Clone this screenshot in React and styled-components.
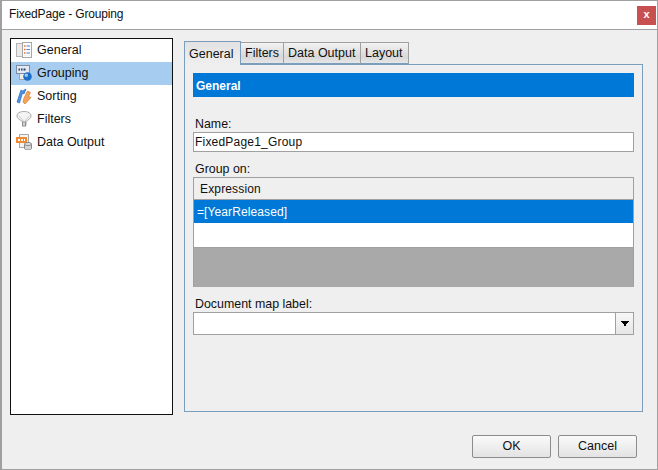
import styled, { createGlobalStyle } from "styled-components";

const Global = createGlobalStyle`
  html, body { margin: 0; padding: 0; background: #efefef; }
  body { font-family: "Liberation Sans", Arial, sans-serif; font-size: 12px; color: #111; }
`;

function GeneralIcon() {
  return (
    <svg width="16" height="16" viewBox="0 0 16 16">
      <rect x="0.5" y="1.5" width="7" height="13" fill="#e9e9e9" stroke="#b5b5b5" />
      <rect x="6.5" y="0.5" width="9" height="15" fill="#fbfbfb" stroke="#a8a8a8" />
      <path d="M8 4h1.500M8 7.500h1.500M8 11h1.500" stroke="#e8772e" strokeWidth="1.4" />
      <path d="M10.500 4h3.500M10.500 7.500h3.500M10.500 11h3.500" stroke="#4a86cc" strokeWidth="1.200" />
    </svg>
  );
}

function GroupingIcon() {
  return (
    <svg width="16" height="16" viewBox="0 0 16 16">
      <rect x="3.500" y="6.500" width="7" height="8" fill="#eeeeee" stroke="#a5a5a5" />
      <rect x="0.500" y="0.500" width="13" height="8" fill="#e3eaf4" stroke="#7f8da0" />
      <path d="M2.500 4.500h1.500M5 4.500h1.500M7.500 4.500h2" stroke="#2b3f63" strokeWidth="2" />
      <circle cx="11.500" cy="11.500" r="4.300" fill="#1b6fc8" />
      <circle cx="10.300" cy="10.300" r="1.700" fill="#9acbf4" />
    </svg>
  );
}

function SortingIcon() {
  return (
    <svg width="16" height="16" viewBox="0 0 16 16">
      <path d="M1 14L5 2l1.500 1L10 1 8 6 6.500 5 3.500 15z" fill="#4c93e6" stroke="#2a68bd" strokeWidth="0.700" />
      <path d="M8 10l3.500-7 3 1.500-2 4 2.500 1-6 6.500-2-2z" fill="#f3a45c" stroke="#e07a2a" strokeWidth="0.700" />
    </svg>
  );
}

function FiltersIcon() {
  return (
    <svg width="16" height="16" viewBox="0 0 16 16">
      <path d="M1 5c0-3 3-4.500 7-4.500s7 1.500 7 4.500c0 2.500-3 4-5 5.500v4H6.500v-4C4 9 1 7.500 1 5z" fill="#f4f4f4" stroke="#a8a8a8" />
      <path d="M3 5l4.500 5M13 5L9 10" stroke="#c9c9c9" fill="none" />
      <rect x="6.500" y="11" width="3" height="4" fill="#d5d5d5" stroke="#8f8f8f" />
    </svg>
  );
}

function DataOutputIcon() {
  return (
    <svg width="16" height="16" viewBox="0 0 16 16">
      <rect x="3.500" y="0.500" width="9" height="13" fill="#f3f3f3" stroke="#a8a8a8" />
      <rect x="0" y="3" width="11" height="6" fill="#ee8a32" />
      <path d="M2 6h7" stroke="#fff" strokeWidth="2" strokeDasharray="2 1" />
      <path d="M8.500 10v4.500c0 .8 1.500 1.500 3.500 1.500s3.500-.7 3.500-1.500V10" fill="#d5d5d5" stroke="#888" />
      <ellipse cx="12" cy="10" rx="3.500" ry="1.500" fill="#e3e3e3" stroke="#888" />
    </svg>
  );
}

const navItems = [
  { label: "General", Icon: GeneralIcon },
  { label: "Grouping", Icon: GroupingIcon, selected: true },
  { label: "Sorting", Icon: SortingIcon },
  { label: "Filters", Icon: FiltersIcon },
  { label: "Data Output", Icon: DataOutputIcon },
];

const tabs = [
  { label: "General", width: 57 },
  { label: "Filters", width: 43 },
  { label: "Data Output", width: 77 },
  { label: "Layout", width: 48 },
];

function App() {
  return (
    <>
      <Global />
      <Window>
        <TitleBar>
          <Title>FixedPage - Grouping</Title>
          <CloseButton>x</CloseButton>
        </TitleBar>
        <Body>
          <Main>
            <NavList>
              {navItems.map(({ label, Icon, selected }) => (
                <NavItem key={label} $selected={selected}>
                  <Icon />
                  {label}
                </NavItem>
              ))}
            </NavList>
            <TabArea>
              <TabStrip>
                {tabs.map((tab, i) => (
                  <Tab key={tab.label} $active={i === 0} $width={tab.width}>{tab.label}</Tab>
                ))}
              </TabStrip>
              <TabPanel>
                <SectionHeader>General</SectionHeader>
                <Label $top={20}>Name:</Label>
                <TextInput>FixedPage1_Group</TextInput>
                <Label $top={10}>Group on:</Label>
                <Grid>
                  <GridHeader>Expression</GridHeader>
                  <SelectedRow>=[YearReleased]</SelectedRow>
                  <EmptyRow />
                  <GridFill />
                </Grid>
                <Label $top={10}>Document map label:</Label>
                <Combo>
                  <ComboField />
                  <ComboButton>
                    <svg width="8" height="5" viewBox="0 0 8 5">
                      <path d="M0 0h8v1H7v1H6v1H5v2H3V3H2V2H1V1H0z" fill="#000" />
                    </svg>
                  </ComboButton>
                </Combo>
              </TabPanel>
            </TabArea>
          </Main>
          <Footer>
            <Button>OK</Button>
            <Button>Cancel</Button>
          </Footer>
        </Body>
      </Window>
    </>
  );
}

const Window = styled.div`
  width: 658px;
  height: 470px;
  box-sizing: border-box;
  display: flex;
  flex-direction: column;
  background: #efefef;
  border: 1px solid #a0a0a0;
  border-left-width: 2px;
  overflow: hidden;
`;

const TitleBar = styled.div`
  height: 28px;
  flex: none;
  display: flex;
  align-items: flex-start;
  justify-content: space-between;
  background: #fff;
  border-bottom: 1px solid #a0a0a0;
`;

const Title = styled.div`
  padding: 6px 0 0 7px;
  font-size: 12px;
  line-height: 15px;
  color: #111;
  letter-spacing: -0.15px;
`;

const CloseButton = styled.div`
  width: 19px;
  height: 19px;
  margin: 5px 1px 0 0;
  background: #c75050;
  color: #fff;
  font-weight: bold;
  font-size: 11px;
  line-height: 17px;
  text-align: center;
`;

const Body = styled.div`
  flex: 1;
  display: flex;
  flex-direction: column;
  padding: 8px 15px 0 8px;
`;

const Main = styled.div`
  display: flex;
  align-items: flex-start;
  gap: 11px;
`;

const NavList = styled.div`
  width: 163px;
  height: 377px;
  box-sizing: border-box;
  flex: none;
  background: #fff;
  border: 1px solid #111;
`;

const NavItem = styled.div`
  height: 23px;
  box-sizing: border-box;
  padding: 0 0 2px 5px;
  display: flex;
  align-items: center;
  gap: 5px;
  font-size: 12.5px;
  background: ${(p) => (p.$selected ? "#a6cdf0" : "transparent")};
`;

const TabArea = styled.div`
  flex: 1;
  display: flex;
  flex-direction: column;
  padding-top: 3px;
`;

const TabStrip = styled.div`
  display: flex;
  height: 23px;
  align-items: flex-end;
`;

const Tab = styled.div`
  box-sizing: border-box;
  width: ${(p) => p.$width}px;
  height: ${(p) => (p.$active ? "24px" : "22px")};
  padding-left: 4px;
  margin-bottom: ${(p) => (p.$active ? "-1px" : "0")};
  position: relative;
  z-index: ${(p) => (p.$active ? 1 : 0)};
  display: flex;
  align-items: center;
  font-size: 12.5px;
  white-space: nowrap;
  border: 1px solid ${(p) => (p.$active ? "#7b9ebd" : "#a0a0a0")};
  border-left-width: ${(p) => (p.$active ? "1px" : "0")};
  border-bottom: ${(p) => (p.$active ? "none" : "1px solid #7b9ebd")};
  background: ${(p) =>
    p.$active ? "linear-gradient(#e2e2e2, #efefef)" : "linear-gradient(#f2f2f2, #d8d8d8 70%, #e6e6e6)"};
`;

const TabPanel = styled.div`
  width: 459px;
  height: 348px;
  box-sizing: border-box;
  padding: 8px;
  border: 1px solid #7b9ebd;
`;

const SectionHeader = styled.div`
  height: 24px;
  line-height: 26px;
  padding-left: 3px;
  background: #0078d7;
  color: #fff;
  font-weight: bold;
  font-size: 12px;
`;

const Label = styled.div`
  margin-top: ${(p) => p.$top}px;
  margin-bottom: 1px;
  height: 14px;
  line-height: 14px;
  padding-left: 2px;
  font-size: 12.4px;
`;

const TextInput = styled.div`
  height: 20px;
  box-sizing: border-box;
  line-height: 18px;
  padding-left: 1px;
  background: #fff;
  border: 1px solid #a0a0a0;
  font-size: 12px;
  letter-spacing: 0.2px;
`;

const Grid = styled.div`
  height: 110px;
  box-sizing: border-box;
  display: flex;
  flex-direction: column;
  background: #a9a9a9;
  border: 1px solid #a0a0a0;
  border-bottom-color: #a9a9a9;
`;

const GridHeader = styled.div`
  height: 21px;
  line-height: 23px;
  padding-left: 6px;
  background: #efefef;
  border-bottom: 1px solid #a0a0a0;
  letter-spacing: 0.15px;
`;

const SelectedRow = styled.div`
  height: 23px;
  line-height: 25px;
  padding-left: 3px;
  background: #0078d7;
  color: #fff;
  letter-spacing: 0.1px;
`;

const EmptyRow = styled.div`
  height: 25px;
  box-sizing: border-box;
  background: #fff;
  border-bottom: 1px solid #a0a0a0;
`;

const GridFill = styled.div`
  flex: 1;
`;

const Combo = styled.div`
  height: 23px;
  box-sizing: border-box;
  display: flex;
  border: 1px solid #a0a0a0;
`;

const ComboField = styled.div`
  flex: 1;
  background: #fff;
`;

const ComboButton = styled.div`
  width: 17px;
  display: flex;
  align-items: center;
  justify-content: center;
  border-left: 1px solid #a0a0a0;
  background: linear-gradient(#f7f7f7, #e6e6e6);
`;

const Footer = styled.div`
  display: flex;
  justify-content: flex-end;
  gap: 7px;
  margin-top: 20px;
  padding-right: 5px;
`;

const Button = styled.div`
  width: 79px;
  height: 23px;
  box-sizing: border-box;
  line-height: 21px;
  text-align: center;
  font-size: 12.5px;
  border: 1px solid #8c8c8c;
  border-radius: 2px;
  background: linear-gradient(#fafafa, #e3e3e3);
`;

export default App;
